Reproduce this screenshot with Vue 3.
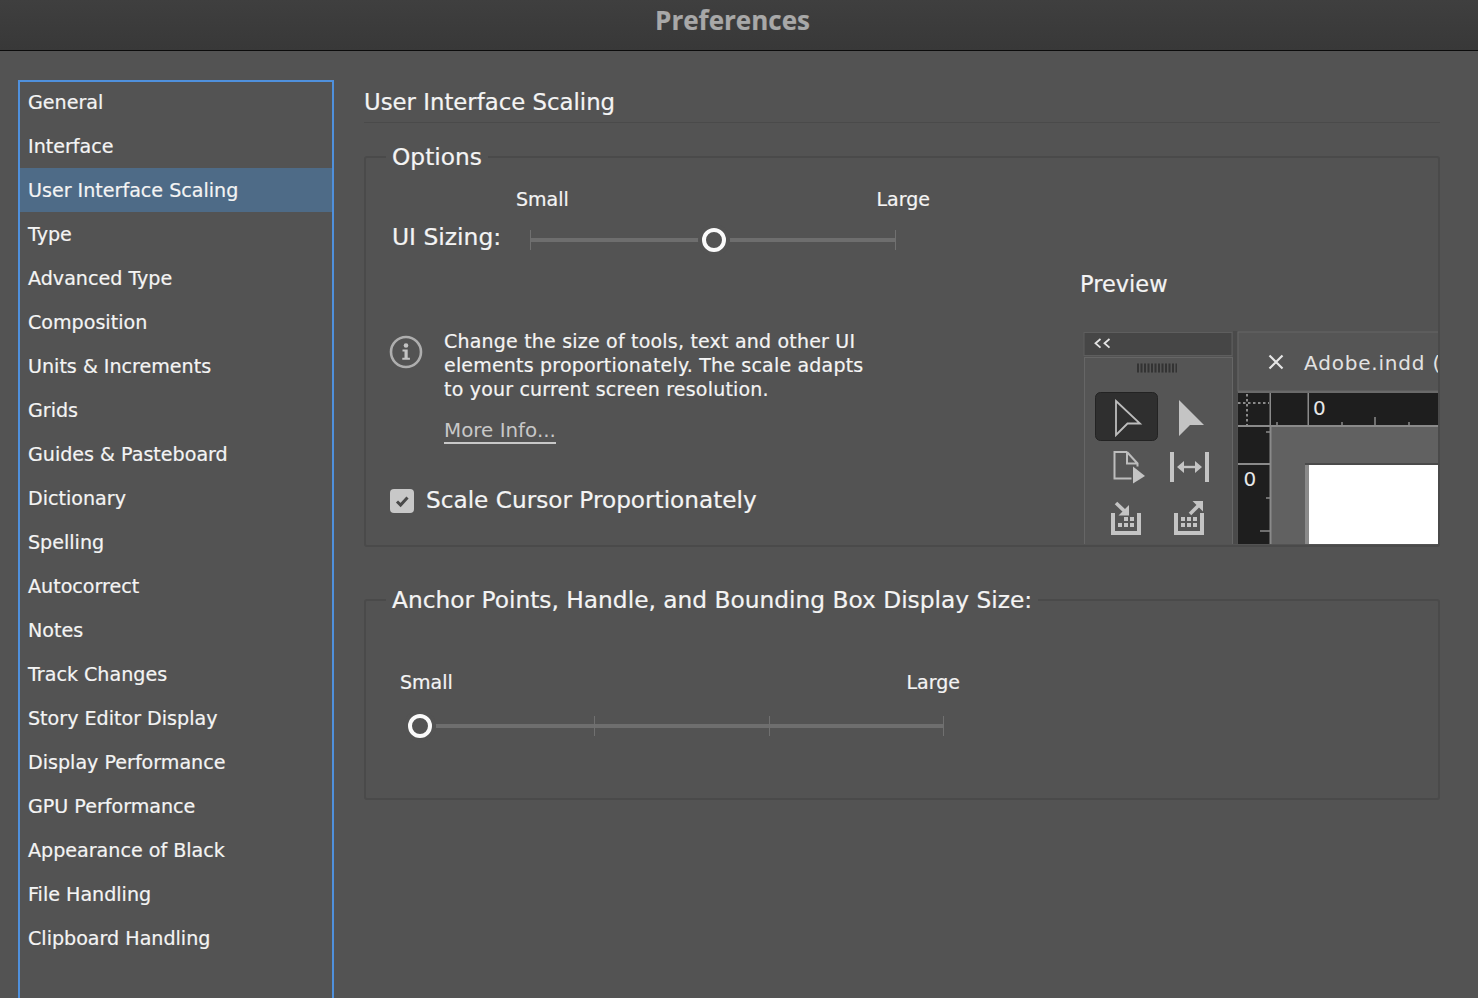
<script setup>
const items = ['General','Interface','User Interface Scaling','Type','Advanced Type','Composition','Units & Increments','Grids','Guides & Pasteboard','Dictionary','Spelling','Autocorrect','Notes','Track Changes','Story Editor Display','Display Performance','GPU Performance','Appearance of Black','File Handling','Clipboard Handling']
const selected = 'User Interface Scaling'
const anchorTicks = [33.2, 66.8, 100]
</script>

<template>
  <div class="app">
    <header class="titlebar">Preferences</header>
    <div class="body">
      <nav class="sidebar">
        <ul class="list">
          <li v-for="item in items" :key="item" class="row" :class="{ active: item === selected }">{{ item }}</li>
        </ul>
      </nav>
      <main class="main">
        <h1 class="heading">User Interface Scaling</h1>

        <fieldset class="group options">
          <legend class="legend">Options</legend>
          <div class="opts-left">
            <div class="labels labels-ui"><span>Small</span><span>Large</span></div>
            <div class="ui-row">
              <span class="ui-label">UI Sizing:</span>
              <div class="slider slider-ui">
                <i class="track"></i>
                <i class="tick" style="left: 0"></i>
                <i class="tick" style="left: 100%"></i>
                <i class="thumb" style="left: 50.4%"></i>
              </div>
            </div>
            <div class="info">
              <svg class="info-icon" width="34" height="34" viewBox="0 0 34 34">
                <circle cx="17" cy="17" r="15" fill="none" stroke="#aeaeae" stroke-width="2.600" />
                <circle cx="17" cy="10.500" r="2.300" fill="#c4c4c4" />
                <path d="M13.500 14.400h5.200v8.400h2.200v2h-7.600v-2h2.200v-6.400h-2z" fill="#c4c4c4" />
              </svg>
              <div class="info-text">
                <p>Change the size of tools, text and other UI<br />elements proportionately. The scale adapts<br />to your current screen resolution.</p>
                <a class="more">More Info...</a>
              </div>
            </div>
            <label class="check">
              <span class="box">
                <svg width="24" height="24" viewBox="0 0 24 24"><path d="M7 12.500l3.600 3.600L17.500 8.500" fill="none" stroke="#4a4a4a" stroke-width="3" /></svg>
              </span>
              <span class="check-label">Scale Cursor Proportionately</span>
            </label>
          </div>
          <div class="opts-right">
            <div class="preview-title">Preview</div>
            <svg class="preview" width="355" height="213" viewBox="1083 331 355 213">
              <rect x="1083" y="331" width="355" height="213" fill="#535353" />
              <!-- tool panel -->
              <rect x="1084" y="332.500" width="148" height="23" fill="#464646" stroke="#5e5e5e" />
              <path d="M1100.500 339l-5 4.300 5 4.300M1109.500 339l-5 4.300 5 4.300" fill="none" stroke="#e4e4e4" stroke-width="1.800" />
              <rect x="1084.500" y="357.500" width="148" height="190" fill="#555555" stroke="#666666" />
              <path d="M1137 368h40" stroke="#333333" stroke-width="9" stroke-dasharray="2 1.500" />
              <rect x="1095.500" y="392.500" width="62" height="48" rx="5" fill="#2f2f2f" stroke="#232323" />
              <path d="M1116 401l24 22.500h-12.500l-11.500 11.500z" fill="none" stroke="#bdbdbd" stroke-width="1.800" />
              <path d="M1179 400l25 25h-14l-11 11z" fill="#c4c4c4" />
              <path d="M1127 452h-12.500v26.500h17M1127 452l10.500 11.500v3M1127 452v11.500h10.500" fill="none" stroke="#bdbdbd" stroke-width="2" />
              <path d="M1133 466.500l12 9.500-12 7.500z" fill="#c4c4c4" />
              <path d="M1170 452h4v30h-4zM1205 452h4v30h-4z" fill="#c4c4c4" />
              <path d="M1182 467h15" stroke="#c4c4c4" stroke-width="2.400" />
              <path d="M1177 467l7-6v12zM1202 467l-7-6v12z" fill="#c4c4c4" />
              <path d="M1111 513h4v18h22v-18h4v22h-30z" fill="#c4c4c4" />
              <path d="M1118 523h4v4h-4zM1124 523h4v4h-4zM1130 523h4v4h-4zM1124 517h4v4h-4zM1130 517h4v4h-4z" fill="#c4c4c4" />
              <path d="M1116 503l10 9.500" stroke="#c4c4c4" stroke-width="3.600" fill="none" />
              <path d="M1129 505v10.500h-10.500z" fill="#c4c4c4" />
              <path d="M1174 513h4v18h22v-18h4v22h-30z" fill="#c4c4c4" />
              <path d="M1181 517h4v4h-4zM1187 517h4v4h-4zM1193 517h4v4h-4zM1181 523h4v4h-4zM1187 523h4v4h-4zM1193 523h4v4h-4z" fill="#c4c4c4" />
              <path d="M1190 514l10-10" stroke="#c4c4c4" stroke-width="3.600" fill="none" />
              <path d="M1192.500 501h10.500v10.500z" fill="#c4c4c4" />
              <!-- gutter -->
              <rect x="1233" y="331" width="4.500" height="214" fill="#4a4a4a" />
              <!-- tab -->
              <rect x="1238" y="332" width="202" height="59" fill="#555555" stroke="#666666" />
              <path d="M1269.500 355.500l13 13M1282.500 355.500l-13 13" stroke="#e6e6e6" stroke-width="2.200" />
              <text x="1304" y="370" class="tab-text">Adobe.indd (</text>
              <rect x="1238" y="391" width="201" height="2" fill="#6a6a6a" />
              <!-- rulers -->
              <rect x="1238" y="393" width="201" height="32" fill="#1e1e1e" />
              <rect x="1238" y="427" width="32" height="118" fill="#1e1e1e" />
              <rect x="1238" y="425" width="201" height="2" fill="#8a8a8a" />
              <rect x="1269.500" y="393" width="1.500" height="32" fill="#8a8a8a" />
              <rect x="1307.500" y="393" width="1.500" height="32" fill="#8a8a8a" />
              <path d="M1238 403h31" stroke="#8a8a8a" stroke-width="2" stroke-dasharray="2.500 2.500" />
              <path d="M1247 394v31" stroke="#8a8a8a" stroke-width="2" stroke-dasharray="2.500 2.500" />
              <path d="M1277 422v3M1342 422v3M1375 417v8M1409 422v3" stroke="#8a8a8a" stroke-width="1.500" />
              <text x="1313" y="415" class="ruler-text">0</text>
              <rect x="1238" y="463" width="32" height="2" fill="#8a8a8a" />
              <text x="1243.500" y="486" class="ruler-text">0</text>
              <path d="M1266 432h4M1266 498h4M1260 531h10" stroke="#8a8a8a" stroke-width="1.500" />
              <!-- pasteboard -->
              <rect x="1270" y="427" width="169" height="118" fill="#616161" />
              <rect x="1269.500" y="427" width="2" height="118" fill="#8a8a8a" />
              <rect x="1305" y="463" width="134" height="2" fill="#4a4a4a" />
              <rect x="1305" y="465" width="4" height="80" fill="#8a8a8a" />
              <rect x="1309" y="465" width="130" height="80" fill="#ffffff" />
            </svg>
          </div>
        </fieldset>

        <fieldset class="group anchors">
          <legend class="legend">Anchor Points, Handle, and Bounding Box Display Size:</legend>
          <div class="labels labels-anchor"><span>Small</span><span>Large</span></div>
          <div class="slider slider-anchor">
            <i class="track"></i>
            <i v-for="t in anchorTicks" :key="t" class="tick" :style="{ left: t + '%' }"></i>
            <i class="thumb" style="left: 0"></i>
          </div>
        </fieldset>
      </main>
    </div>
  </div>
</template>

<style>
html, body { margin: 0; background: #535353; }
</style>

<style scoped>
.app {
  height: 998px;
  overflow: hidden;
  display: flex;
  flex-direction: column;
  background: #535353;
  color: #f4f4f4;
  font-family: "DejaVu Sans", "Liberation Sans", sans-serif;
  font-size: 19.100px;
  -webkit-text-stroke: 0.2px currentColor;
}
.titlebar {
  height: 40px;
  flex: none;
  border-bottom: 1px solid #0c0c0c;
  background: linear-gradient(#3f3f3f, #383838);
  color: #a8a8a8;
  display: flex;
  align-items: center;
  justify-content: center;
  padding-right: 13px;
  padding-bottom: 10px;
  font-family: "Open Sans", sans-serif;
  font-weight: 700;
  font-size: 26px;
}
.body {
  flex: 1;
  display: flex;
  gap: 30px;
  padding: 29px 38px 0 18px;
  min-height: 0;
}
.sidebar {
  width: 316px;
  flex: none;
  box-sizing: border-box;
  border: 2px solid #4f90dc;
  border-bottom: none;
}
.list {
  list-style: none;
  margin: -2px 0 0;
  padding: 0;
}
.row {
  height: 44px;
  line-height: 46px;
  padding-left: 8px;
}
.row.active { background: #4e6b87; }
.main { flex: 1; min-width: 0; }
.heading {
  margin: 0;
  height: 42px;
  line-height: 44px;
  font-size: 22.800px;
  font-weight: 400;
  border-bottom: 1px solid #4a4a4a;
}
.group {
  margin: 0;
  padding: 0;
  border: 2px solid #4a4a4a;
  border-radius: 3px;
  min-width: 0;
}
.legend {
  margin-left: 20px;
  padding: 0 6px;
  height: 28px;
  line-height: 28px;
  font-size: 23.300px;
}
.options { margin-top: 20px; display: flex; }
.opts-left { width: 688px; padding-left: 26px; box-sizing: border-box; flex: none; }
.opts-right { padding-top: 101px; margin-left: 26px; padding-bottom: 1px; }
.labels { display: flex; justify-content: space-between; height: 24px; line-height: 24px; font-size: 19px; }
.labels-ui { margin: 16px 0 0 124px; width: 414px; }
.ui-row { display: flex; align-items: center; height: 36px; margin-top: 11px; }
.ui-label { width: 138px; font-size: 23.400px; margin-top: -6px; }
.slider { position: relative; height: 24px; }
.slider-ui { width: 365px; }
.slider-anchor { width: 523px; margin: 20px 0 0 54px; }
.track {
  position: absolute;
  left: 0; right: 0; top: 10px;
  height: 4px;
  background: #6e6e6e;
}
.tick {
  position: absolute;
  top: 2px;
  width: 1px;
  height: 20px;
  background: #707070;
}
.thumb {
  position: absolute;
  top: 0;
  width: 24px;
  height: 24px;
  margin-left: -12px;
  box-sizing: border-box;
  border: 4px solid #fafafa;
  border-radius: 50%;
  background: #535353;
  box-shadow: 0 0 0 4px #535353;
}
.info { display: flex; margin-top: 71px; }
.info-icon { margin: 6px 0 0 -3px; flex: none; }
.info-text { margin-left: 21px; }
.info-text p { margin: 0; line-height: 24px; letter-spacing: 0.200px; font-size: 19px; }
.more {
  display: inline-block;
  margin-top: 18px;
  line-height: 23px;
  font-size: 19.900px;
  color: #c8c8c8;
  -webkit-text-stroke: 0;
  border-bottom: 2px solid #c8c8c8;
}
.check { display: flex; align-items: center; gap: 12px; margin-top: 45px; font-size: 23.200px; margin-left: -2px; }
.check-label { margin-top: -3px; }
.box {
  width: 24px; height: 24px;
  border-radius: 4px;
  background: #c8c8c8;
  display: block;
}
.box svg { display: block; }
.preview-title { height: 24px; line-height: 24px; font-size: 22.500px; }
.preview { display: block; margin: 35px 0 0 3px; }
.tab-text { font-size: 20px; fill: #e2e2e2; letter-spacing: 0.800px; font-family: "DejaVu Sans", sans-serif; }
.ruler-text { font-size: 20px; fill: #e8e8e8; font-family: "DejaVu Sans", sans-serif; }
.anchors { margin-top: 39px; height: 214px; box-sizing: border-box; }
.labels-anchor { margin: 56px 0 0 34px; width: 560px; }
</style>
